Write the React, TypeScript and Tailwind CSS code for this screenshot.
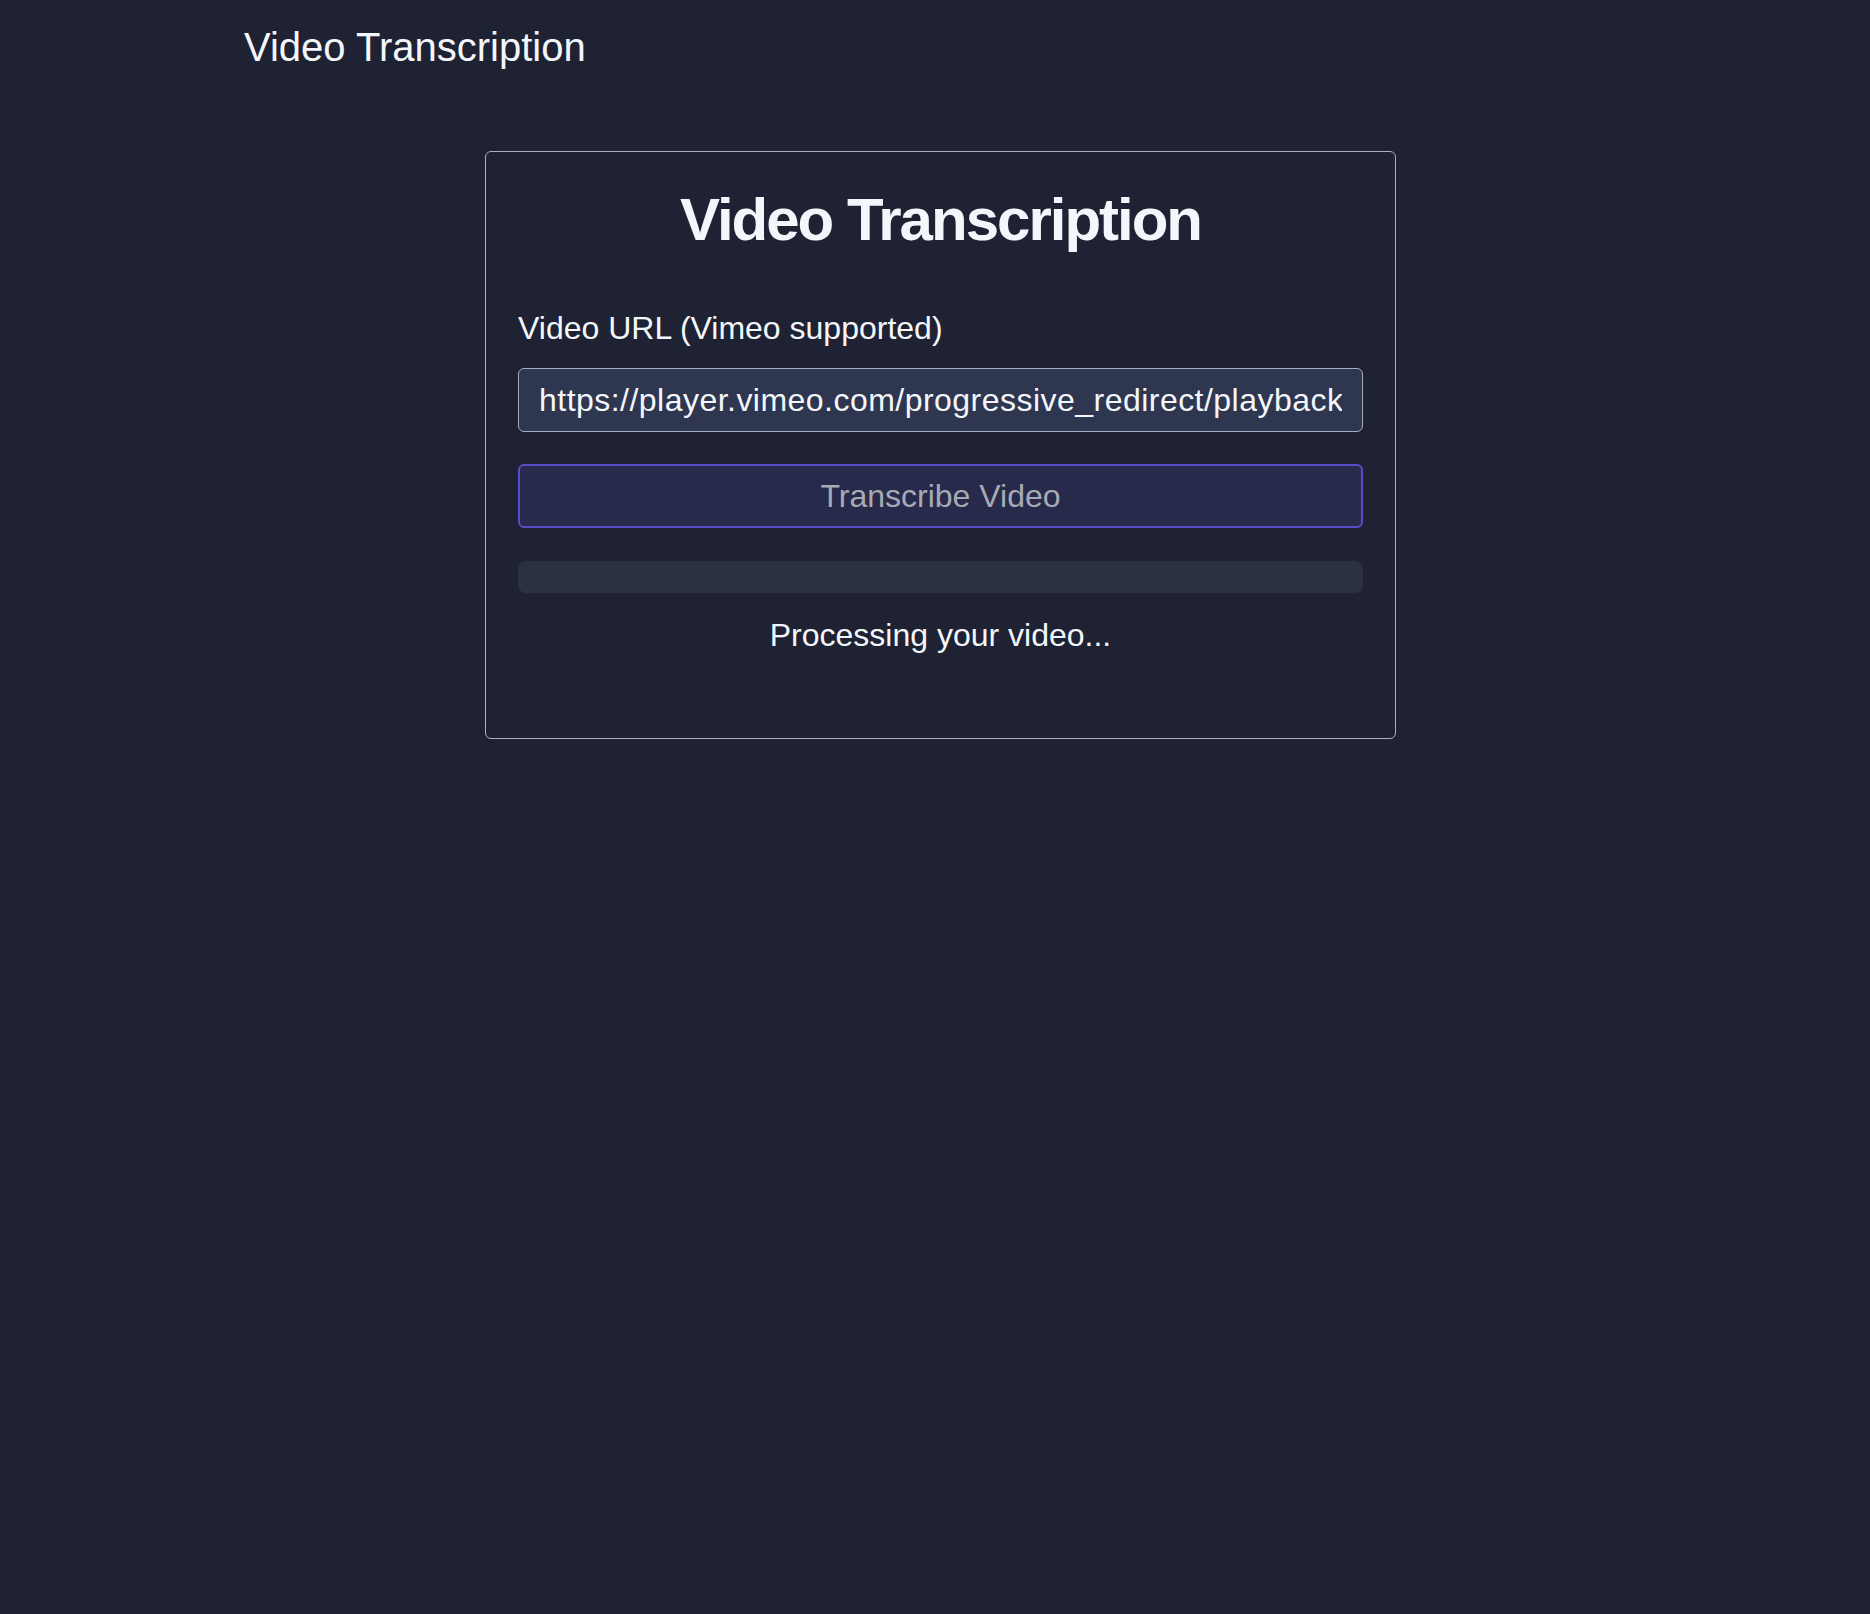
import React from 'react';

const VIDEO_URL =
  'https://player.vimeo.com/progressive_redirect/playback/912345678/rendition/1080p/file.mp4?loc=external&signature=abc123';

const Header = () => {
  return (
    <header className="pl-[244px] pt-[19px] pb-[19px]">
      <h1 className="text-[40px] leading-[56px] text-[#f3f6fa]">Video Transcription</h1>
    </header>
  );
};

const TranscribeCard = () => {
  return (
    <div className="ml-[485px] w-[911px] rounded-[6px] border border-[#aab0c2] p-[32px]">
      <h2 className="mb-[48px] text-center text-[60px] leading-[72px] font-bold tracking-[-2px] text-[#f3f6fa]">
        Video Transcription
      </h2>

      <label className="mb-[16px] block text-[32px] leading-[48px] text-[#f3f6fa]">
        Video URL (Vimeo supported)
      </label>
      <input
        type="text"
        readOnly
        value={VIDEO_URL}
        className="block h-[64px] w-full rounded-[6px] border border-[#a6acbe] bg-[#2e3650] px-[20px] text-[32px] tracking-[0.47px] text-[#f3f6fa] outline-none"
      />

      <button
        type="button"
        disabled
        className="mt-[32px] flex h-[64px] w-full items-center justify-center rounded-[6px] border-2 border-[#5a4cc7] bg-[#282a4b] text-[32px] text-[#a7a9b3]"
      >
        Transcribe Video
      </button>

      <div className="mt-[33px] h-[32px] w-full rounded-[8px] bg-[#2b3042]" />

      <p className="mt-[18px] mb-[47px] text-center text-[32px] leading-[48px] text-[#f3f6fa]">
        Processing your video...
      </p>
    </div>
  );
};

const App = () => {
  return (
    <div
      className="min-h-[1614px] w-full bg-[#1e2233]"
      style={{ fontFamily: '"Liberation Sans", Arial, sans-serif' }}
    >
      <Header />
      <main className="pt-[57px]">
        <TranscribeCard />
      </main>
    </div>
  );
};

export default App;
